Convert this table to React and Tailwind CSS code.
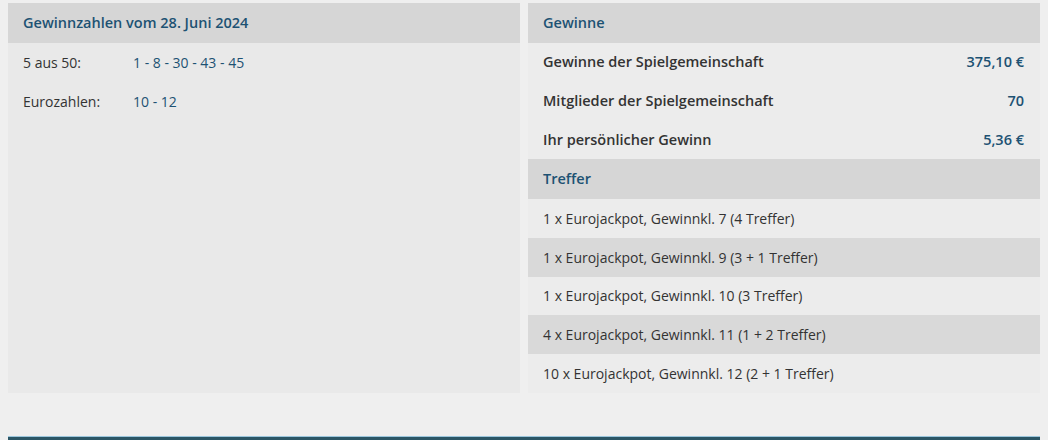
import React from "react";

const teal = "text-[#1d5273]";

const zahlen = [
  { label: "5 aus 50:", value: "1 - 8 - 30 - 43 - 45" },
  { label: "Eurozahlen:", value: "10 - 12" },
];

const gewinne = [
  { label: "Gewinne der Spielgemeinschaft", value: "375,10 €" },
  { label: "Mitglieder der Spielgemeinschaft", value: "70" },
  { label: "Ihr persönlicher Gewinn", value: "5,36 €" },
];

const treffer = [
  "1 x Eurojackpot, Gewinnkl. 7 (4 Treffer)",
  "1 x Eurojackpot, Gewinnkl. 9 (3 + 1 Treffer)",
  "1 x Eurojackpot, Gewinnkl. 10 (3 Treffer)",
  "4 x Eurojackpot, Gewinnkl. 11 (1 + 2 Treffer)",
  "10 x Eurojackpot, Gewinnkl. 12 (2 + 1 Treffer)",
];

const Header = ({ children }) => (
  <div className={`h-[40px] flex items-center px-[15px] bg-[#d6d6d6] font-semibold text-[14.5px] ${teal}`}>
    {children}
  </div>
);

export default function App() {
  return (
    <div
      className="w-[1048px] h-[440px] bg-[#efefef] overflow-hidden flex flex-col px-[8px] pt-[3px]"
      style={{ fontFamily: '"Open Sans", "Noto Sans", sans-serif' }}
    >
      <div className="flex gap-[8px] h-[390px]">
        {/* Gewinnzahlen */}
        <div className="w-[512px] bg-[#e9e9e9] flex flex-col">
          <Header>Gewinnzahlen vom 28. Juni 2024</Header>
          {zahlen.map((z) => (
            <div key={z.label} className="h-[39px] flex items-center px-[15px] text-[14px]">
              <span className="w-[110px] text-[#333]">{z.label}</span>
              <span className={teal}>{z.value}</span>
            </div>
          ))}
        </div>

        {/* Gewinne + Treffer */}
        <div className="w-[512px] bg-[#ececec] flex flex-col">
          <Header>Gewinne</Header>
          {gewinne.map((g) => (
            <div key={g.label} className="h-[39px] flex items-center justify-between pl-[15px] pr-[16px] text-[14.5px] font-semibold">
              <span className="text-[#333]">{g.label}</span>
              <span className={teal}>{g.value}</span>
            </div>
          ))}
          <Header>Treffer</Header>
          {treffer.map((t, i) => (
            <div
              key={t}
              className={`h-[39px] flex items-center px-[15px] text-[14px] text-[#333] ${
                i % 2 === 1 ? "bg-[#d9d9d9]" : "bg-[#ececec]"
              }`}
            >
              {t}
            </div>
          ))}
        </div>
      </div>

      <div className="mt-auto h-[4px] border-t border-[#9cc6dc] bg-[#2b5666]" />
    </div>
  );
}
